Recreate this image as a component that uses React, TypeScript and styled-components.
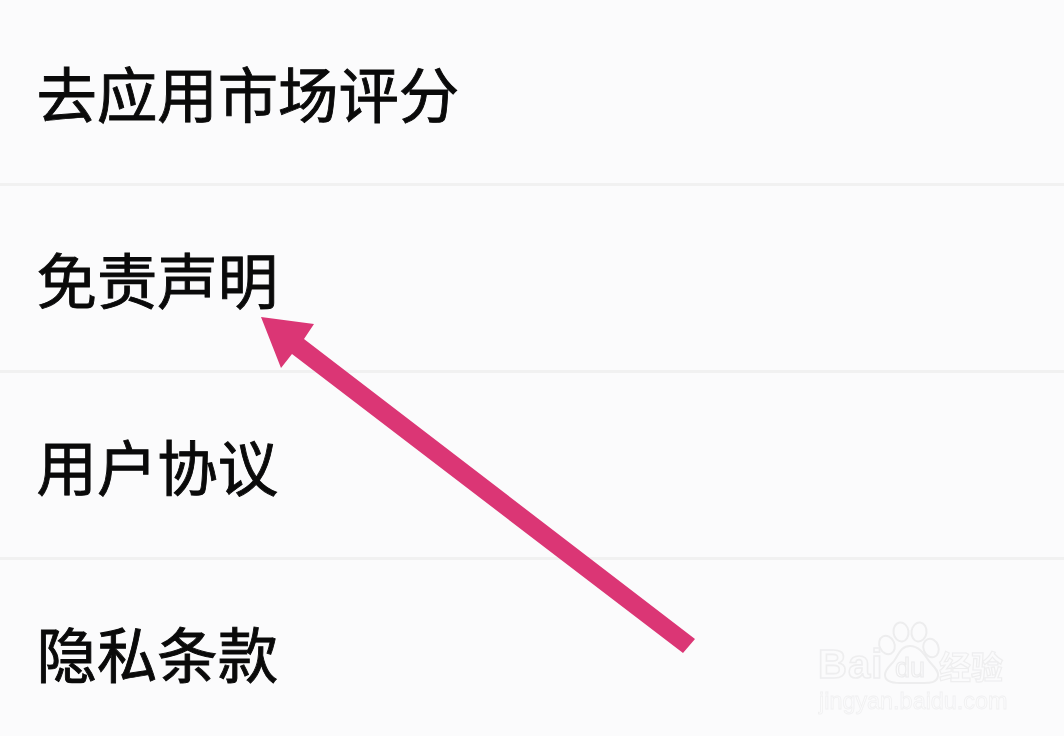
import React from "react";
import styled, { createGlobalStyle } from "styled-components";

const Global = createGlobalStyle`
  html, body { margin: 0; padding: 0; background: #fbfbfc; }
  body { width: 1064px; height: 736px; overflow: hidden; }
`;

const Page = styled.div`
  position: relative;
  width: 1064px;
  height: 736px;
  overflow: hidden;
  background: #fbfbfc;
`;

const List = styled.ul`
  list-style: none;
  margin: 0;
  padding: 0;
  display: flex;
  flex-direction: column;
`;

const Row = styled.li`
  box-sizing: border-box;
  height: 187px;
  display: flex;
  align-items: flex-start;
  padding: 62px 0 0 36.5px;
  border-bottom: 3px solid #f1f1f1;
  font-family: "Noto Sans CJK SC", "Liberation Sans", sans-serif;
  font-size: 60.4px;
  line-height: 1;
  color: #0a0a0a;
  -webkit-text-stroke: 0.9px #0a0a0a;
  filter: blur(0.5px);
  &:first-child { height: 186px; }
  &:last-child { border-bottom: none; }
`;

const Arrow = styled.svg`
  position: absolute;
  left: 0;
  top: 0;
  filter: blur(0.4px);
`;

const Watermark = styled.div`
  position: absolute;
  left: 816px;
  top: 620px;
  width: 195px;
  height: 96px;
  color: transparent;
`;

const Paw = styled.svg`
  position: absolute;
  left: 0;
  top: 0;
  filter: blur(0.5px);
`;

const BrandText = styled.span`
  position: absolute;
  left: 2px;
  top: 21px;
  font-family: "Liberation Sans", sans-serif;
  font-weight: 700;
  font-size: 40px;
  line-height: 46px;
  letter-spacing: 1px;
  -webkit-text-stroke: 1.6px #eeeeef;
  filter: blur(0.4px);
`;

const BrandCjk = styled.span`
  position: absolute;
  left: 123px;
  top: 27px;
  font-family: "Noto Sans CJK SC", sans-serif;
  font-weight: 700;
  font-size: 32px;
  line-height: 36px;
  -webkit-text-stroke: 1.2px #eeeeef;
  filter: blur(0.4px);
`;

const Domain = styled.span`
  position: absolute;
  left: 3px;
  top: 67px;
  font-family: "Liberation Sans", sans-serif;
  font-size: 23.4px;
  line-height: 28px;
  white-space: nowrap;
  -webkit-text-stroke: 0.8px #f0f0f1;
  filter: blur(0.4px);
`;

const DuText = styled.text`
  font-family: "Liberation Sans", sans-serif;
  font-size: 27px;
  fill: none;
  stroke: #ececed;
  stroke-width: 1.2;
`;

export default function App() {
  return (
    <Page>
      <Global />
      <List>
        <Row>去应用市场评分</Row>
        <Row>免责声明</Row>
        <Row>用户协议</Row>
        <Row>隐私条款</Row>
      </List>
      <Arrow width="1064" height="736" viewBox="0 0 1064 736">
        <polygon
          points="261,317 314,324 304,339 695,639 683,653 292,354 281,368"
          fill="#db3675"
        />
      </Arrow>
      <Watermark>
        <Paw width="195" height="96" viewBox="0 0 195 96" fill="none" stroke="#ededee" strokeWidth="2">
          <ellipse cx="85" cy="12" rx="7.5" ry="9.5" transform="rotate(-8 85 12)" />
          <ellipse cx="103" cy="12" rx="7.5" ry="9.5" transform="rotate(8 103 12)" />
          <ellipse cx="71" cy="25" rx="7.5" ry="9.5" transform="rotate(-25 71 25)" />
          <ellipse cx="115" cy="28" rx="7.5" ry="9.5" transform="rotate(-20 115 28)" />
          <path d="M94 26c9 0 14 8 19 15 5 6 10 10 9 15-1 7-9 7-14 7H84c-7 0-15-1-15-8 0-6 5-9 9-14 5-7 7-15 16-15z" />
          <DuText x="79" y="57">du</DuText>
        </Paw>
        <BrandText>Bai</BrandText>
        <BrandCjk>经验</BrandCjk>
        <Domain>jingyan.baidu.com</Domain>
      </Watermark>
    </Page>
  );
}
